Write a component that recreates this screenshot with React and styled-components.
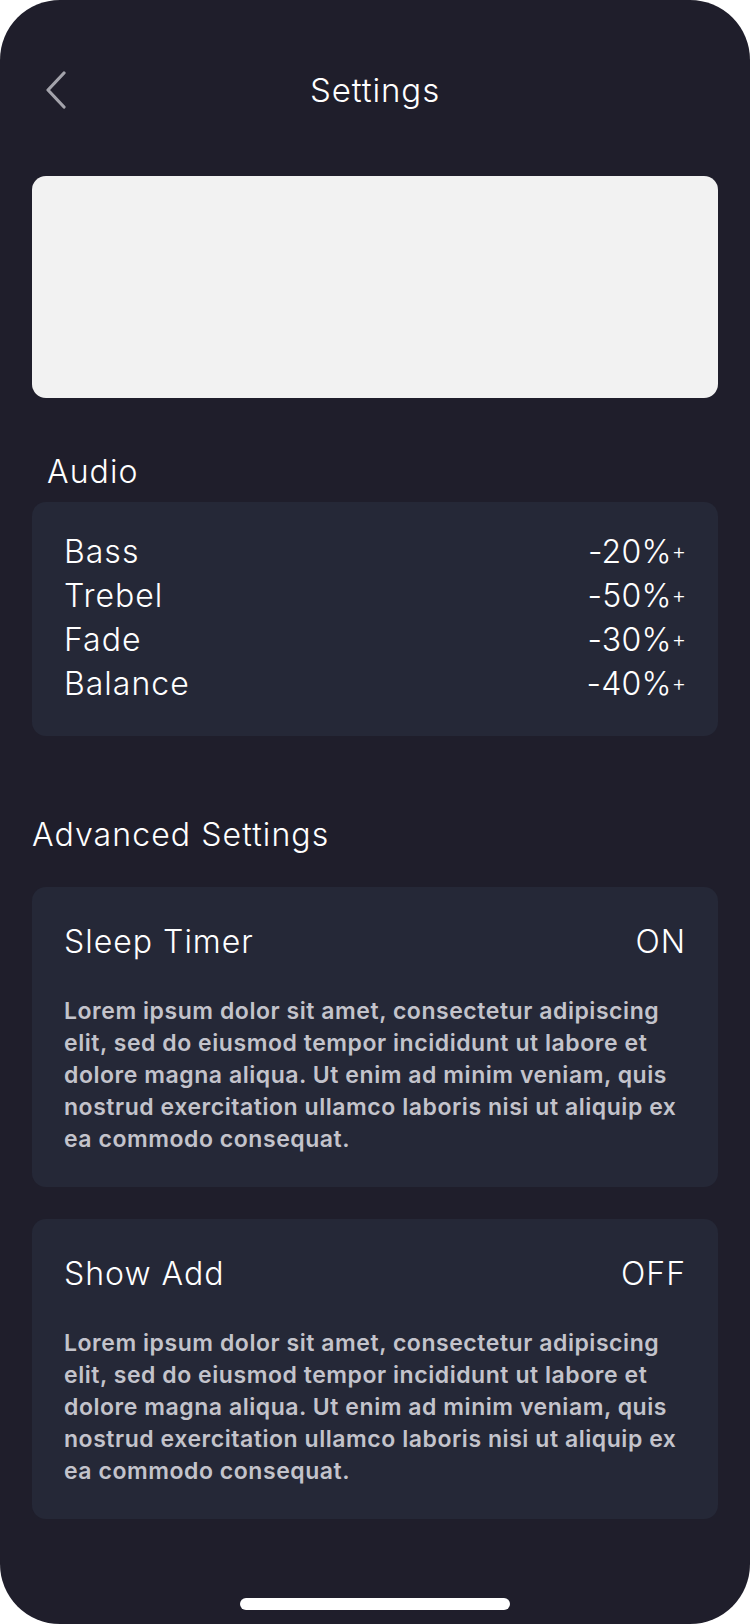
import React from "react";
import styled, { createGlobalStyle } from "styled-components";

const GlobalStyle = createGlobalStyle`
  * { box-sizing: border-box; }
  html, body {
    margin: 0;
    padding: 0;
    background: #ffffff;
  }
`;

const Frame = styled.div`
  width: 750px;
  height: 1624px;
  background: #1f1e2b;
  border-radius: 60px;
  overflow: hidden;
  display: flex;
  flex-direction: column;
  padding: 56px 32px 14px;
  font-family: Inter, "Open Sans", sans-serif;
  color: #ffffff;
`;

const Header = styled.header`
  display: grid;
  grid-template-columns: 1fr auto 1fr;
  align-items: center;
  height: 68px;
`;

const BackButton = styled.button`
  justify-self: start;
  display: flex;
  align-items: center;
  background: transparent;
  border: none;
  padding: 0 0 0 13px;
  cursor: pointer;
`;

const Title = styled.h1`
  margin: 0;
  font-size: 33px;
  font-weight: 300;
  letter-spacing: 0.9px;
`;

const Banner = styled.div`
  margin-top: 52px;
  height: 222px;
  background: #f2f2f2;
  border-radius: 14px;
`;

const SectionLabel = styled.h2`
  margin: ${(p) => p.$top}px 0 0;
  padding-left: ${(p) => p.$indent || 0}px;
  font-size: 32px;
  line-height: 40px;
  font-weight: 300;
  letter-spacing: 1.1px;
`;

const Card = styled.section`
  margin-top: ${(p) => p.$top}px;
  background: #252837;
  border-radius: 14px;
  padding: ${(p) => p.$pad};
`;

const Row = styled.div`
  display: flex;
  justify-content: space-between;
  align-items: center;
  height: ${(p) => p.$h}px;
  font-size: 32px;
  font-weight: 300;
  letter-spacing: 1px;
`;

const Value = styled.span`
  letter-spacing: 0.2px;
`;

const Plus = styled.span`
  font-size: 22px;
  position: relative;
  top: -4px;
  letter-spacing: 0;
`;

const Body = styled.p`
  margin: 34px 0 0;
  font-size: 23px;
  line-height: 32px;
  font-weight: 600;
  letter-spacing: 0.55px;
  color: #c3c3cb;
`;

const HomeBar = styled.div`
  margin-top: auto;
  align-self: center;
  width: 270px;
  height: 12px;
  border-radius: 6px;
  background: #ffffff;
`;

const audio = [
  { name: "Bass", value: "-20%" },
  { name: "Trebel", value: "-50%" },
  { name: "Fade", value: "-30%" },
  { name: "Balance", value: "-40%" },
];

const lorem =
  "Lorem ipsum dolor sit amet, consectetur adipiscing elit, sed do eiusmod tempor incididunt ut labore et dolore magna aliqua. Ut enim ad minim veniam, quis nostrud exercitation ullamco laboris nisi ut aliquip ex ea commodo consequat.";

const advanced = [
  { name: "Sleep Timer", state: "ON" },
  { name: "Show Add", state: "OFF" },
];

export default function App() {
  return (
    <>
      <GlobalStyle />
      <Frame>
        <Header>
          <BackButton aria-label="Back">
            <svg width="22" height="38" viewBox="0 0 22 38" fill="none">
              <path
                d="M19 2 L3 19 L19 36"
                stroke="#a3a3ab"
                strokeWidth="3.2"
                strokeLinecap="round"
                strokeLinejoin="round"
              />
            </svg>
          </BackButton>
          <Title>Settings</Title>
          <span />
        </Header>

        <Banner />

        <SectionLabel $top={54} $indent={15}>
          Audio
        </SectionLabel>
        <Card $top={10} $pad="27px 32px 31px">
          {audio.map((a) => (
            <Row key={a.name} $h={44}>
              <span>{a.name}</span>
              <Value>
                {a.value}
                <Plus>+</Plus>
              </Value>
            </Row>
          ))}
        </Card>

        <SectionLabel $top={79}>Advanced Settings</SectionLabel>
        {advanced.map((s) => (
          <Card key={s.name} $top={32} $pad="34px 32px 32px">
            <Row $h={40}>
              <span>{s.name}</span>
              <span>{s.state}</span>
            </Row>
            <Body>{lorem}</Body>
          </Card>
        ))}

        <HomeBar />
      </Frame>
    </>
  );
}
